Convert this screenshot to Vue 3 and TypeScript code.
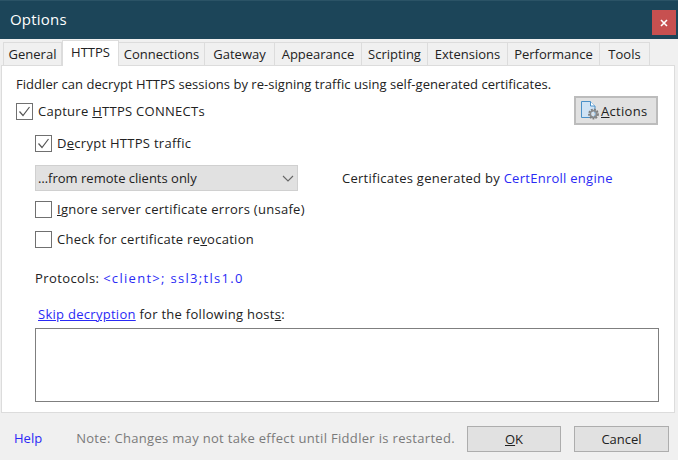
<script setup lang="ts">
const tabs = [
  { label: 'General', width: 59 },
  { label: 'HTTPS', width: 57, active: true },
  { label: 'Connections', width: 86 },
  { label: 'Gateway', width: 70 },
  { label: 'Appearance', width: 87 },
  { label: 'Scripting', width: 66 },
  { label: 'Extensions', width: 80 },
  { label: 'Performance', width: 92 },
  { label: 'Tools', width: 50 },
]
</script>

<template>
  <div class="window">
    <header class="titlebar">
      <span class="title">Options</span>
      <button class="close" aria-label="Close">
        <svg width="8" height="8" viewBox="0 0 8 8"><path d="M1 1L7 7M7 1L1 7" stroke="#fff" stroke-width="1.6" /></svg>
      </button>
    </header>

    <nav class="tabs">
      <div
        v-for="t in tabs"
        :key="t.label"
        class="tab"
        :class="{ active: t.active }"
        :style="{ width: t.width + 'px' }"
      >{{ t.label }}</div>
    </nav>

    <main class="panel">
      <p class="intro">Fiddler can decrypt HTTPS sessions by re-signing traffic using self-generated certificates.</p>

      <div class="capture-row">
        <label class="check capture">
          <span class="box">
            <svg width="13" height="13" viewBox="0 0 13 13"><path d="M1.5 6.5L5 10.5L11.5 2" fill="none" stroke="#555" stroke-width="1.2" /></svg>
          </span>
          <span>Capture <u>H</u>TTPS CONNECTs</span>
        </label>
        <button class="btn actions">
          <svg class="actions-icon" width="21" height="21" viewBox="0 0 21 21">
            <path d="M1.5 1.5H10.5L15 6V17.5H1.5Z" fill="#cfe3f5" stroke="#4a90c8" stroke-width="1" />
            <path d="M10.5 1.5V6H15" fill="#fff" stroke="#4a90c8" stroke-width="1" />
            <circle cx="13.5" cy="14" r="4.2" fill="none" stroke="#7d7d7d" stroke-width="2.4" stroke-dasharray="1.8 1" />
            <circle cx="13.5" cy="14" r="3.2" fill="none" stroke="#8a8a8a" stroke-width="1.6" />
            <circle cx="13.5" cy="14" r="1.3" fill="#e1e1e1" />
          </svg>
          <span class="actions-label"><u>A</u>ctions</span>
        </button>
      </div>

      <div class="indented">
        <label class="check decrypt">
          <span class="box">
            <svg width="13" height="13" viewBox="0 0 13 13"><path d="M1.5 6.5L5 10.5L11.5 2" fill="none" stroke="#555" stroke-width="1.2" /></svg>
          </span>
          <span>D<u>e</u>crypt HTTPS traffic</span>
        </label>

        <div class="select-row">
          <div class="select">
            <span>…from remote clients only</span>
            <svg width="12" height="7" viewBox="0 0 12 7"><path d="M1 1L6 6L11 1" fill="none" stroke="#666" stroke-width="1.1" /></svg>
          </div>
          <span class="engine">Certificates generated by <a class="link plain">CertEnroll engine</a></span>
        </div>

        <label class="check ignore">
          <span class="box"></span>
          <span><u>I</u>gnore server certificate errors (unsafe)</span>
        </label>
        <label class="check revoke">
          <span class="box"></span>
          <span>Check for certificate re<u>v</u>ocation</span>
        </label>
      </div>

      <div class="protocols">Protocols: <a class="link plain proto-value">&lt;client&gt;; ssl3;tls1.0</a></div>

      <div class="skip"><a class="link">Skip decryption</a> for the following host<u>s</u>:</div>
      <div class="hosts"></div>
    </main>

    <footer class="footer">
      <a class="link plain help">Help</a>
      <span class="note">Note: Changes may not take effect until Fiddler is restarted.</span>
      <button class="btn foot-btn ok"><u>O</u>K</button>
      <button class="btn foot-btn">Cancel</button>
    </footer>
  </div>
</template>

<style>
html, body { margin: 0; background: #f0f0f0; }
</style>

<style scoped>
.window {
  width: 678px;
  height: 460px;
  background: #f0f0f0;
  font-family: "Open Sans", "Noto Sans", sans-serif;
  font-size: 13px;
  color: #222;
  display: flex;
  flex-direction: column;
  overflow: hidden;
}
.titlebar {
  height: 39px;
  flex: none;
  background: #1c4559;
  border-top: 1px solid #2b5366;
  box-sizing: border-box;
  display: flex;
  align-items: flex-start;
  justify-content: space-between;
  color: #fff;
}
.title { font-size: 15px; line-height: 20px; margin: 8px 0 0 10px; letter-spacing: .2px; }
.close {
  width: 24px;
  height: 25px;
  margin: 9px 2px 0 0;
  padding: 0;
  border: 0;
  background: #c75050;
  display: flex;
  align-items: center;
  justify-content: center;
}
.tabs {
  display: flex;
  height: 26px;
  padding: 0 0 0 3px;
  flex: none;
  position: relative;
  z-index: 1;
  box-sizing: border-box;
}
.tab {
  box-sizing: border-box;
  height: 23px;
  margin-top: 3px;
  border: 1px solid #dcdcdc;
  border-bottom: 0;
  border-left: 0;
  background: #f0f0f0;
  display: flex;
  align-items: center;
  justify-content: center;
}
.tab:first-child { border-left: 1px solid #dcdcdc; }
.tab.active {
  height: 26px;
  margin-top: 1px;
  background: #fff;
  border-left: 1px solid #dcdcdc;
  padding-bottom: 3px;
}
.panel {
  flex: none;
  box-sizing: border-box;
  height: 348px;
  margin: 0 3px 0 1px;
  background: #fff;
  border: 1px solid #dcdcdc;
  padding: 8px 15px 0 14px;
}
.intro { margin: 0; line-height: 20px; height: 20px; letter-spacing: .04px; }
.check { display: flex; align-items: center; gap: 5px; line-height: 18px; letter-spacing: .28px; }
.box {
  width: 15px;
  height: 15px;
  flex: none;
  border: 1px solid #707070;
  background: #fff;
  display: flex;
  align-items: center;
  justify-content: center;
}
.capture-row {
  display: flex;
  justify-content: space-between;
  align-items: flex-start;
  margin-top: 1px;
}
.capture { margin-top: 7px; }
.btn {
  box-sizing: border-box;
  font: inherit;
  color: #222;
  background: #e1e1e1;
  border: 1px solid #adadad;
  padding: 0;
}
.actions {
  width: 84px;
  height: 29px;
  margin: 1px 1px 0 0;
  display: flex;
  align-items: center;
  padding-left: 4px;
  border-width: 2px;
  border-color: #bcbcbc;
}
.actions-icon { flex: none; }
.actions-label { letter-spacing: .3px; }
.indented { padding-left: 19px; }
.decrypt { margin-top: 9px; }
.select-row { display: flex; align-items: center; margin-top: 13px; }
.select {
  box-sizing: border-box;
  width: 263px;
  height: 26px;
  background: #e1e1e1;
  border: 1px solid #d0d0d0;
  padding: 0 3px 0 2px;
  display: flex;
  align-items: center;
  justify-content: space-between;
}
.engine { margin-left: 44px; letter-spacing: .27px; }
.ignore { margin-top: 9px; }
.revoke { margin-top: 12px; }
.link { color: #2a2af5; text-decoration: underline; }
.link.plain { text-decoration: none; }
.protocols { margin-top: 21px; padding-left: 19px; line-height: 18px; letter-spacing: .4px; }
.proto-value { letter-spacing: 1.3px; }
.skip { margin-top: 18px; padding-left: 22px; line-height: 18px; letter-spacing: .28px; }
.hosts {
  box-sizing: border-box;
  height: 74px;
  width: 624px;
  margin: 5px 0 0 19px;
  border: 1px solid #7f7f7f;
  background: #fff;
}
.footer {
  flex: 1;
  display: flex;
  align-items: flex-start;
  padding: 0 9px 0 14px;
}
.help { margin-top: 16px; }
.note { margin: 16px 0 0 34px; color: #7a7a7a; width: 391px; letter-spacing: .32px; white-space: nowrap; }
.foot-btn { width: 95px; height: 26px; margin-top: 13px; }
.ok { width: 94px; margin-right: 13px; }
</style>
